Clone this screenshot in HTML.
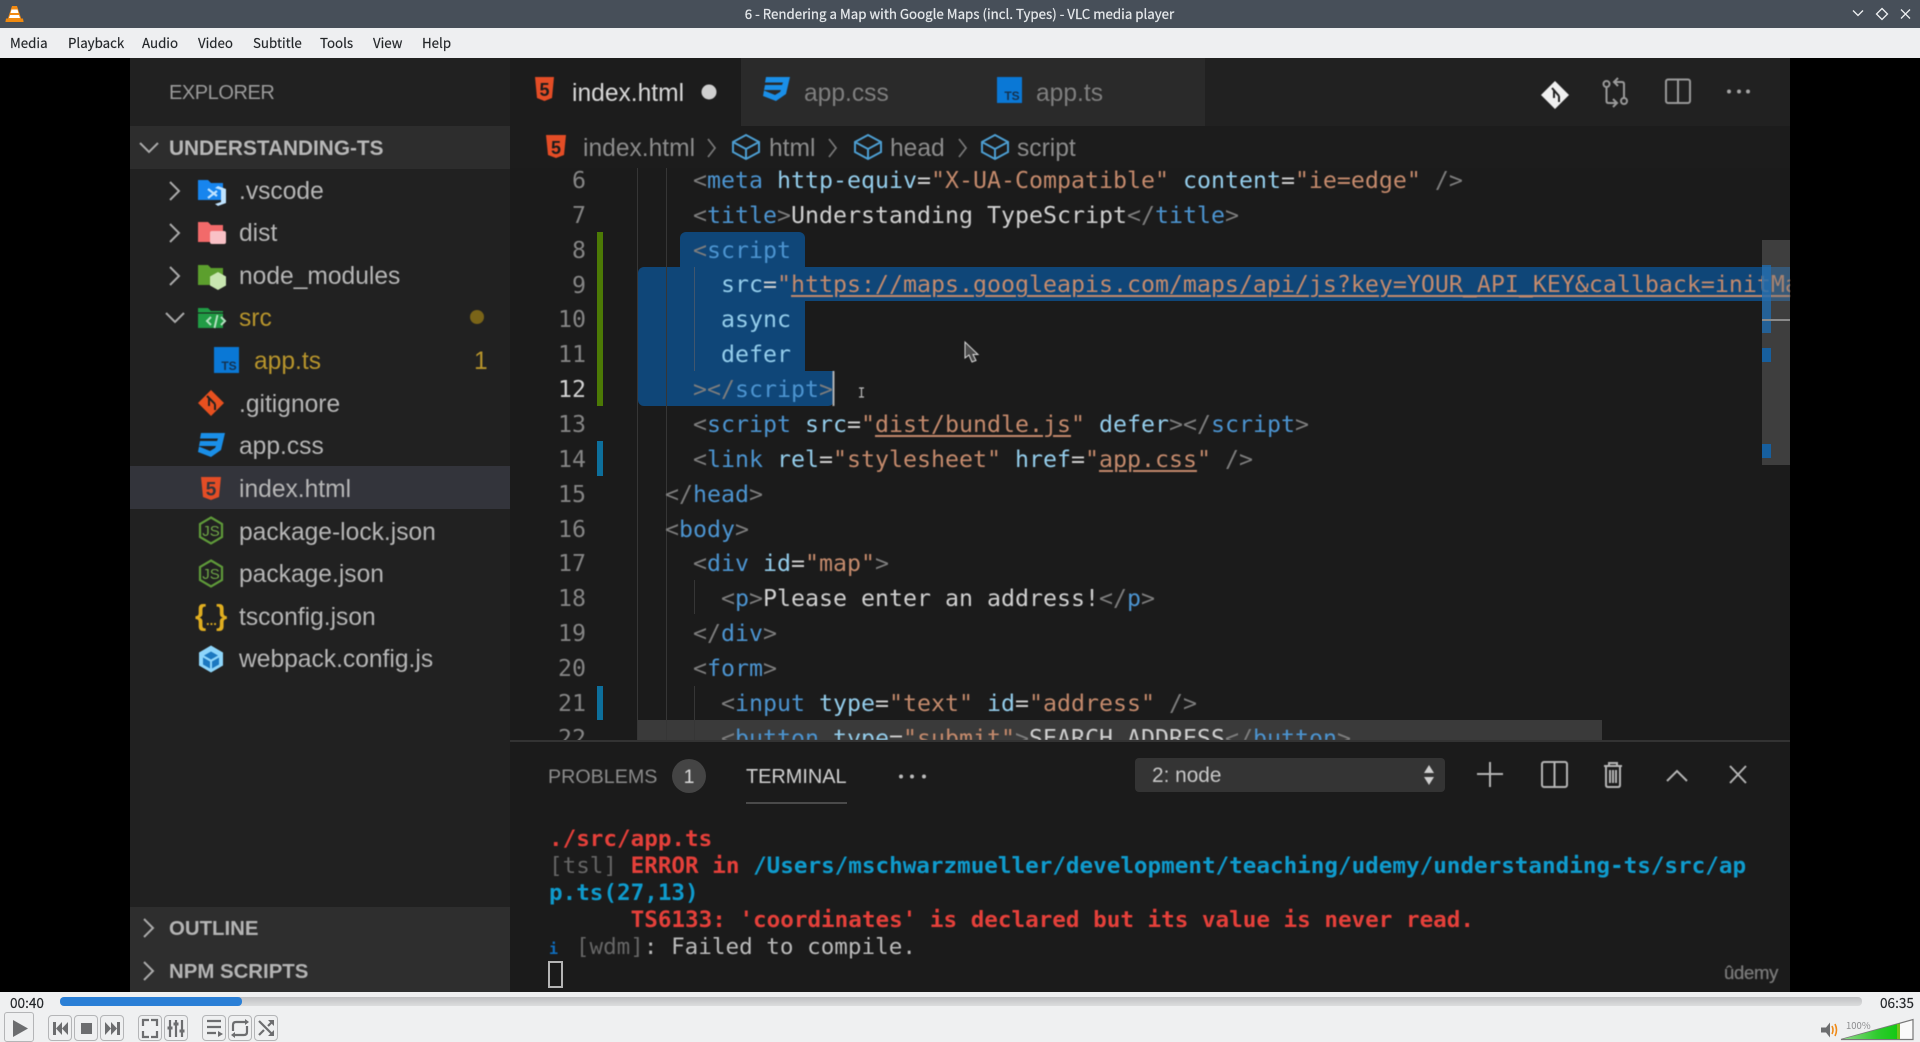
<!DOCTYPE html>
<html lang="en"><head><meta charset="utf-8"><title>6 - Rendering a Map with Google Maps (incl. Types) - VLC media player</title>
<style>
html,body{margin:0;padding:0;width:1920px;height:1042px;overflow:hidden;background:#000}
div,pre,span{box-sizing:border-box}
.a{position:absolute;white-space:pre}
#title{left:0;top:0;width:1920px;height:28px;background:#474f59}
#tt{left:644px;top:0;width:631px;height:28px;text-align:center;color:#e6e9ec;font:13.3px/28px "Noto Sans CJK SC","Liberation Sans",sans-serif;-webkit-text-stroke:.2px #e6e9ec}
#menu{left:0;top:28px;width:1920px;height:30px;background:#eeeff1}
.m{top:28px;font:13.3px/30px "Noto Sans CJK SC","Liberation Sans",sans-serif;color:#232629;-webkit-text-stroke:.15px #232629}
#video{left:0;top:58px;width:1920px;height:934px;background:#000}
.s{font-family:"Liberation Sans",sans-serif;filter:blur(.45px)}
.r{font:24.6px/40px "Liberation Sans",sans-serif;color:#b6b6b6;height:40px;margin-top:1px;filter:blur(.45px)}
#code,#term{font-family:"DejaVu Sans Mono","Liberation Mono",monospace}
#code{left:637px;top:168px;width:1153px;height:572px;overflow:hidden;font-size:23.26px;line-height:34.87px;margin:0;filter:blur(.45px)}
#code pre{position:absolute;left:0;top:-4.2px;margin:0;font:inherit;line-height:34.87px;color:#d0d0d0}
.p{color:#7d7d7d}.t{color:#4c94d0}.k{color:#94cdeb}.v{color:#c48a6c}.u{text-decoration:underline;text-decoration-thickness:2px;text-underline-offset:3px}
.n{left:540px;width:46px;text-align:right;font:23.26px/34.87px "DejaVu Sans Mono",monospace;color:#858585;margin-top:1.3px;filter:blur(.45px)}
#term{left:549px;top:826px;font-size:22.6px;line-height:27.1px;font-weight:bold;margin:0;color:#ccc;position:absolute;filter:blur(.45px)}
.rd{color:#e5403a}.bl{color:#0f9bcd}.gy{color:#666;font-weight:normal}
.ctl{font:13.6px/16px "Noto Sans CJK SC","Liberation Sans",sans-serif;color:#232629;-webkit-text-stroke:.15px #232629}
</style></head><body>
<div class="a" id="title"></div>
<div class="a" id="tt">6 - Rendering a Map with Google Maps (incl. Types) - VLC media player</div>
<div class="a" id="menu"></div>
<div class="a m" style="left:10px">Media</div>
<div class="a m" style="left:68px">Playback</div>
<div class="a m" style="left:142px">Audio</div>
<div class="a m" style="left:198px">Video</div>
<div class="a m" style="left:253px">Subtitle</div>
<div class="a m" style="left:320px">Tools</div>
<div class="a m" style="left:373px">View</div>
<div class="a m" style="left:422px">Help</div>
<div class="a" id="video"></div>

<div class="a" style="left:130px;top:58px;width:380px;height:934px;background:#212121"></div>
<div class="a" style="left:510px;top:58px;width:1280px;height:68px;background:#212121"></div>
<div class="a" style="left:510px;top:58px;width:231px;height:68px;background:#1c1c1c"></div>
<div class="a" style="left:741px;top:58px;width:232px;height:68px;background:#2a2a2a"></div>
<div class="a" style="left:973px;top:58px;width:232px;height:68px;background:#2a2a2a"></div>
<div class="a" style="left:510px;top:126px;width:1280px;height:42px;background:#1c1c1c"></div>
<div class="a" style="left:510px;top:168px;width:1280px;height:824px;background:#1b1b1b"></div>

<div class="a" style="left:130px;top:126px;width:380px;height:43px;background:#2d2d2d"></div>
<div class="a" style="left:130px;top:466px;width:380px;height:43px;background:#33343b"></div>
<div class="a" style="left:130px;top:907px;width:380px;height:85px;background:#2e2e2e"></div>

<div class="a s" style="left:169px;top:73px;font-size:20px;line-height:40px;color:#9b9b9b;letter-spacing:-.45px">EXPLORER</div>
<div class="a s" style="left:169px;top:129px;font-size:20.8px;line-height:40px;font-weight:bold;color:#b8b8b8">UNDERSTANDING-TS</div>
<div class="a r" style="left:239px;top:171px">.vscode</div>
<div class="a r" style="left:239px;top:213px">dist</div>
<div class="a r" style="left:239px;top:256px">node_modules</div>
<div class="a r" style="left:239px;top:298px;color:#b8952c">src</div>
<div class="a r" style="left:254px;top:341px;color:#b8952c">app.ts</div>
<div class="a r" style="left:239px;top:384px">.gitignore</div>
<div class="a r" style="left:239px;top:426px">app.css</div>
<div class="a r" style="left:239px;top:469px">index.html</div>
<div class="a r" style="left:239px;top:512px">package-lock.json</div>
<div class="a r" style="left:239px;top:554px">package.json</div>
<div class="a r" style="left:239px;top:597px">tsconfig.json</div>
<div class="a r" style="left:239px;top:639px">webpack.config.js</div>
<div class="a r" style="left:474px;top:341px;color:#b8952c">1</div>
<div class="a s" style="left:169px;top:909px;font-size:20.4px;line-height:40px;font-weight:bold;color:#b4b4b4">OUTLINE</div>
<div class="a s" style="left:169px;top:952px;font-size:20.4px;line-height:40px;font-weight:bold;color:#b4b4b4">NPM SCRIPTS</div>

<div class="a r" style="left:572px;top:73px;color:#d8d8d8">index.html</div>
<div class="a r" style="left:804px;top:73px;color:#7f7f7f">app.css</div>
<div class="a r" style="left:1036px;top:73px;color:#7f7f7f">app.ts</div>
<div class="a r" style="left:583px;top:128px;color:#8c8c8c">index.html</div>
<div class="a r" style="left:769px;top:128px;color:#8c8c8c">html</div>
<div class="a r" style="left:890px;top:128px;color:#8c8c8c">head</div>
<div class="a r" style="left:1017px;top:128px;color:#8c8c8c">script</div>

<!-- selection -->
<div class="a" style="left:680px;top:232px;width:125px;height:36px;background:#0f4678;border-radius:6px 6px 0 0"></div>
<div class="a" style="left:638px;top:267px;width:1152px;height:34px;background:#0f4678;border-radius:6px 0 0 0"></div>
<div class="a" style="left:638px;top:300px;width:167px;height:72px;background:#0f4678"></div>
<div class="a" style="left:638px;top:371px;width:196px;height:35px;background:#0f4678;border-radius:0 0 6px 6px"></div>
<div class="a" style="left:638px;top:720px;width:964px;height:21px;background:#3a3a3a"></div>
<div class="a" style="left:637px;top:168px;width:1px;height:572px;background:#363636"></div>
<div class="a" style="left:666px;top:168px;width:1px;height:572px;background:#363636"></div>
<div class="a" style="left:694px;top:267px;width:1px;height:104px;background:#40566e"></div>
<div class="a" style="left:694px;top:580px;width:1px;height:34px;background:#363636"></div>
<div class="a" style="left:694px;top:686px;width:1px;height:54px;background:#363636"></div>
<div class="a" style="left:597px;top:232px;width:6px;height:174px;background:#4c7a05"></div>
<div class="a" style="left:597px;top:441px;width:6px;height:35px;background:#0d6f9c"></div>
<div class="a" style="left:597px;top:686px;width:6px;height:34px;background:#0d6f9c"></div>

<div class="a n" style="top:163px;clip-path:inset(5px 0 0 0)">6</div>
<div class="a n" style="top:197.5px">7</div>
<div class="a n" style="top:232.4px">8</div>
<div class="a n" style="top:267.3px">9</div>
<div class="a n" style="top:302.1px">10</div>
<div class="a n" style="top:337px">11</div>
<div class="a n" style="top:371.9px;color:#d2d2d2">12</div>
<div class="a n" style="top:406.7px">13</div>
<div class="a n" style="top:441.6px">14</div>
<div class="a n" style="top:476.5px">15</div>
<div class="a n" style="top:511.4px">16</div>
<div class="a n" style="top:546.2px">17</div>
<div class="a n" style="top:581.1px">18</div>
<div class="a n" style="top:616px">19</div>
<div class="a n" style="top:650.8px">20</div>
<div class="a n" style="top:685.7px">21</div>
<div class="a n" style="top:720.6px;height:20px;overflow:hidden">22</div>

<div class="a" id="code"><pre>    <span class="p">&lt;</span><span class="t">meta</span> <span class="k">http-equiv</span>=<span class="v">"X-UA-Compatible"</span> <span class="k">content</span>=<span class="v">"ie=edge"</span> <span class="p">/&gt;</span>
    <span class="p">&lt;</span><span class="t">title</span><span class="p">&gt;</span>Understanding TypeScript<span class="p">&lt;/</span><span class="t">title</span><span class="p">&gt;</span>
    <span class="p">&lt;</span><span class="t">script</span>
      <span class="k">src</span>=<span class="v">"</span><span class="v u">https://maps.googleapis.com/maps/api/js?key=YOUR_API_KEY&amp;callback=initMap</span><span class="v">"</span>
      <span class="k">async</span>
      <span class="k">defer</span>
    <span class="p">&gt;&lt;/</span><span class="t">script</span><span class="p">&gt;</span>
    <span class="p">&lt;</span><span class="t">script</span> <span class="k">src</span>=<span class="v">"</span><span class="v u">dist/bundle.js</span><span class="v">"</span> <span class="k">defer</span><span class="p">&gt;&lt;/</span><span class="t">script</span><span class="p">&gt;</span>
    <span class="p">&lt;</span><span class="t">link</span> <span class="k">rel</span>=<span class="v">"stylesheet"</span> <span class="k">href</span>=<span class="v">"</span><span class="v u">app.css</span><span class="v">"</span> <span class="p">/&gt;</span>
  <span class="p">&lt;/</span><span class="t">head</span><span class="p">&gt;</span>
  <span class="p">&lt;</span><span class="t">body</span><span class="p">&gt;</span>
    <span class="p">&lt;</span><span class="t">div</span> <span class="k">id</span>=<span class="v">"map"</span><span class="p">&gt;</span>
      <span class="p">&lt;</span><span class="t">p</span><span class="p">&gt;</span>Please enter an address!<span class="p">&lt;/</span><span class="t">p</span><span class="p">&gt;</span>
    <span class="p">&lt;/</span><span class="t">div</span><span class="p">&gt;</span>
    <span class="p">&lt;</span><span class="t">form</span><span class="p">&gt;</span>
      <span class="p">&lt;</span><span class="t">input</span> <span class="k">type</span>=<span class="v">"text"</span> <span class="k">id</span>=<span class="v">"address"</span> <span class="p">/&gt;</span>
      <span class="p">&lt;</span><span class="t">button</span> <span class="k">type</span>=<span class="v">"submit"</span><span class="p">&gt;</span>SEARCH ADDRESS<span class="p">&lt;/</span><span class="t">button</span><span class="p">&gt;</span></pre></div>

<!-- overview ruler -->
<div class="a" style="left:1762px;top:240px;width:28px;height:225px;background:rgba(120,120,120,.38)"></div>
<div class="a" style="left:1762px;top:265px;width:9px;height:68px;background:rgba(30,110,180,.75)"></div>
<div class="a" style="left:1762px;top:319px;width:28px;height:2px;background:#8a8a8a"></div>
<div class="a" style="left:1762px;top:348px;width:9px;height:14px;background:#175f9e"></div>
<div class="a" style="left:1762px;top:444px;width:9px;height:14px;background:#175f9e"></div>

<!-- panel -->
<div class="a" style="left:510px;top:740px;width:1280px;height:252px;background:#1b1b1b;border-top:2px solid #333"></div>
<div class="a s" style="left:548px;top:757px;font-size:19.7px;line-height:40px;color:#8c8c8c">PROBLEMS</div>
<div class="a" style="left:672px;top:759px;width:34px;height:34px;border-radius:50%;background:#444"></div>
<div class="a s" style="left:672px;top:757px;width:34px;text-align:center;font-size:19.5px;line-height:40px;color:#ddd">1</div>
<div class="a s" style="left:746px;top:757px;font-size:19.9px;line-height:40px;color:#d2d2d2">TERMINAL</div>
<div class="a" style="left:746px;top:802px;width:101px;height:2px;background:#4a4a4a"></div>
<div class="a" style="left:1135px;top:758px;width:310px;height:34px;background:#343434;border-radius:4px"></div>
<div class="a s" style="left:1152px;top:756px;font-size:20.8px;line-height:40px;color:#c8c8c8">2: node</div>
<pre id="term"><span class="rd">./src/app.ts</span>
<span class="gy">[tsl]</span> <span class="rd">ERROR in</span> <span class="bl">/Users/mschwarzmueller/development/teaching/udemy/understanding-ts/src/ap</span>
<span class="bl">p.ts(27,13)</span>
      <span class="rd">TS6133: 'coordinates' is declared but its value is never read.</span>
<span style="color:#0f6fc0;font-size:15px">i</span><span style="font-size:7px"> </span> <span class="gy">[wdm]</span><span style="font-weight:normal;color:#bbb">: Failed to compile.</span></pre>
<div class="a" style="left:548px;top:961px;width:15px;height:27px;border:2px solid #b5b5b5"></div>
<div class="a s" style="left:1724px;top:953px;font-size:18.5px;line-height:40px;color:#7a7a7a;letter-spacing:-.3px;-webkit-text-stroke:.3px #7a7a7a">ûdemy</div>

<!-- bottom controls -->
<div class="a" style="left:0;top:992px;width:1920px;height:50px;background:#eff0f1"></div>
<div class="a" style="left:60px;top:997px;width:1802px;height:9px;border-radius:4px;background:linear-gradient(#bfc0c2,#dcddde)"></div>
<div class="a" style="left:60px;top:997px;width:182px;height:9px;border-radius:4px;background:#2a7fd6"></div>
<div class="a ctl" style="left:10px;top:994px">00:40</div>
<div class="a ctl" style="left:1880px;top:994px">06:35</div>
<div class="a" style="left:4px;top:1012px;width:30px;height:30px;border:1px solid #b4b5b7;border-radius:3px"></div>
<div class="a" style="left:48px;top:1015px;width:24px;height:26px;border:1px solid #b4b5b7;border-radius:4px"></div>
<div class="a" style="left:74px;top:1015px;width:24px;height:26px;border:1px solid #b4b5b7;border-radius:4px"></div>
<div class="a" style="left:100px;top:1015px;width:24px;height:26px;border:1px solid #b4b5b7;border-radius:4px"></div>
<div class="a" style="left:138px;top:1015px;width:24px;height:26px;border:1px solid #b4b5b7;border-radius:4px"></div>
<div class="a" style="left:164px;top:1015px;width:24px;height:26px;border:1px solid #b4b5b7;border-radius:4px"></div>
<div class="a" style="left:202px;top:1015px;width:24px;height:26px;border:1px solid #b4b5b7;border-radius:4px"></div>
<div class="a" style="left:228px;top:1015px;width:24px;height:26px;border:1px solid #b4b5b7;border-radius:4px"></div>
<div class="a" style="left:254px;top:1015px;width:24px;height:26px;border:1px solid #b4b5b7;border-radius:4px"></div>

<svg class="a" style="left:0;top:0" width="1920" height="1042" viewBox="0 0 1920 1042" xmlns="http://www.w3.org/2000/svg">
<!-- VLC cone -->
<path d="M12 6h5l5 15H7z" fill="#f28a12"/><path d="M11.500 9.500h6l1 3.500h-8z" fill="#fff"/><path d="M10 15h9l1 3H9z" fill="#fff"/><path d="M6 18.500h17l.6 3.500H5.400z" fill="#f08a10"/>
<!-- window buttons -->
<g fill="none" stroke="#f0f2f4" stroke-width="1.300"><path d="M1853 10.500l5 5 5-5"/><path d="M1882 8.500l5.500 5.500-5.500 5.500-5.500-5.500z"/><path d="M1901 9.500l9 9M1910 9.500l-9 9"/></g>

<g style="filter:blur(.45px)">
<!-- sidebar chevrons -->
<g fill="none" stroke="#aaa" stroke-width="2">
<path d="M140 143l9 9 9-9"/><path d="M170 182l9 9-9 9"/><path d="M170 224l9 9-9 9"/><path d="M170 267l9 9-9 9"/><path d="M166 313l9 9 9-9"/>
<path d="M144 919l9 9-9 9"/><path d="M144 962l9 9-9 9"/>
</g>
<!-- folders -->
<path d="M198 180h10l3 3h12v17h-25z" fill="#1785ee"/>
<path d="M208 189l9 7M208 198l9-7" stroke="#bfe3ff" stroke-width="2.200" fill="none"/><path d="M218 186l8 3v14l-8 3-3-2 6-2v-12l-6-2z" fill="#bfe3ff"/>
<path d="M198 222h10l3 3h12v17h-25z" fill="#f26a6a"/><rect x="210" y="231" width="16" height="13" rx="2" fill="#f9c1c6"/>
<path d="M198 265h10l3 3h12v17h-25z" fill="#5c9f2d"/><path d="M218 272l8 4.500v9l-8 4.500-8-4.500v-9z" fill="#c8e6b0"/>
<path d="M198 308h10l3 3h12v17h-25z" fill="#219c45"/><path d="M198 313h27" stroke="#1a1a1a" stroke-width="1"/><g fill="none" stroke="#b4e0c0" stroke-width="2"><path d="M211 317l-4 4 4 4M221 317l4 4-4 4M217.500 315l-3 13"/></g>
<!-- ts file -->
<rect x="214" y="347" width="25" height="26" fill="#0a78d6"/><text x="229" y="370" font-family="Liberation Sans" font-size="12" font-weight="bold" fill="#15324f" text-anchor="middle">TS</text>
<!-- gitignore -->
<path d="M211 390l13 13-13 13-13-13z" fill="#e8501f"/><path d="M207 396l8 8M215 404v6M209 398v8" stroke="#212121" stroke-width="2" fill="none"/>
<!-- css icon -->
<path d="M201 433H225L221 450 211 457 198 452 199 446.500 210 451 215 448 216 446H199L200 441H217L218 438.500H200Z" fill="#1a8fe8"/>
<path d="M766 77H790L786 94 776 101 763 96 764 90.500 775 95 780 92 781 90H764L765 85H782L783 82.500H765Z" fill="#1a8fe8"/>
<!-- html icon sidebar -->
<path d="M201 477h20l-2 20-8 3-8-3z" fill="#e44d26"/><text x="211" y="495.500" font-family="Liberation Sans" font-size="19" font-weight="bold" fill="#33343b" text-anchor="middle">5</text>
<!-- js hexagons -->
<g fill="none" stroke="#5f9a3a" stroke-width="2.200"><path d="M211 517.500l11 6.500v13l-11 6.500-11-6.500v-13z"/><path d="M211 560.500l11 6.500v13l-11 6.500-11-6.500v-13z"/></g>
<text x="211" y="536" font-family="Liberation Sans" font-size="15" fill="#6fa648" text-anchor="middle">JS</text><text x="211" y="579" font-family="Liberation Sans" font-size="15" fill="#6fa648" text-anchor="middle">JS</text>
<!-- webpack -->
<path d="M211 645.500l12 7v13l-12 7-12-7v-13z" fill="#8ed6fb"/><path d="M211 651.500l7 4-7 4-7-4zM203 657.500l7 4v7l-7-4zM219 657.500l-7 4v7l7-4z" fill="#1c78c0"/>
<!-- tsconfig -->
<text x="195" y="625" font-family="Liberation Sans" font-size="29" font-weight="bold" fill="#e0ae20">{</text><text x="206" y="625" font-family="Liberation Sans" font-size="13" font-weight="bold" fill="#e0ae20">...</text><text x="216" y="625" font-family="Liberation Sans" font-size="29" font-weight="bold" fill="#e0ae20">}</text>
<circle cx="477" cy="317" r="7" fill="#7a6418"/>

<!-- tab icons -->
<path d="M535 77h19l-2 21-7.500 3-7.500-3z" fill="#e44d26"/><text x="544.500" y="96" font-family="Liberation Sans" font-size="18" font-weight="bold" fill="#1c1c1c" text-anchor="middle">5</text>
<circle cx="709" cy="92" r="7.500" fill="#cfcfcf"/>
<rect x="997" y="77" width="25" height="26" fill="#0a78d6"/><text x="1012" y="100" font-family="Liberation Sans" font-size="12" font-weight="bold" fill="#15324f" text-anchor="middle">TS</text>
<!-- breadcrumb -->
<path d="M546 135h20l-2 20-8 3-8-3z" fill="#e44d26"/><text x="556" y="154" font-family="Liberation Sans" font-size="18" font-weight="bold" fill="#1c1c1c" text-anchor="middle">5</text>
<g fill="none" stroke="#777" stroke-width="1.800"><path d="M708 139l7 9-7 9M829 139l7 9-7 9M959 139l7 9-7 9"/></g>
<g fill="none" stroke="#4d9ed1" stroke-width="2">
<path d="M746 135l13 7v10l-13 7-13-7v-10zM733 142l13 7 13-7M746 149v10"/>
<path d="M868 135l13 7v10l-13 7-13-7v-10zM855 142l13 7 13-7M868 149v10"/>
<path d="M995 135l13 7v10l-13 7-13-7v-10zM982 142l13 7 13-7M995 149v10"/>
</g>
<!-- top right editor icons -->
<path d="M1555 81l14 14-14 14-14-14z" fill="#f0f0f0"/><path d="M1552 88l7 8M1559 96v6M1554 90v8" stroke="#212121" stroke-width="2" fill="none"/>
<g fill="none" stroke="#9a9a9a" stroke-width="2"><circle cx="1606.500" cy="84" r="3"/><circle cx="1624" cy="101" r="3"/><path d="M1606.500 87v14q0 2 2 2h8M1613 99l4 4-4 4M1624 98v-14q0-2-2-2h-8M1618 78l-4 4 4 4"/><rect x="1666" y="79.500" width="24" height="23.500" rx="2"/><path d="M1678 80v23"/></g>
<g fill="#a5a5a5"><circle cx="1729" cy="91.500" r="2"/><circle cx="1739" cy="91.500" r="2"/><circle cx="1748" cy="91.500" r="2"/></g>
<!-- cursor -->
<path d="M965 342v16l4-3 3 7 4-1.500-3-6h5z" fill="#4b4b4b" stroke="#ddd" stroke-width="1"/>
<path d="M833.500 371v35" stroke="#b0b0b0" stroke-width="2"/>
<path d="M859 388h5M859 397h5M861.500 388v9" stroke="#bdbdbd" stroke-width="1.200" fill="none"/>
<!-- panel icons -->
<g fill="#bdbdbd"><circle cx="901" cy="776.500" r="2"/><circle cx="912" cy="776.500" r="2"/><circle cx="924" cy="776.500" r="2"/></g>
<path d="M1429 765l5 8h-10zM1429 785l5-8h-10z" fill="#cfcfcf"/>
<g fill="none" stroke="#b5b5b5" stroke-width="2">
<path d="M1477 774h26M1490 762v25"/>
<rect x="1542" y="762" width="25" height="25" rx="2"/><path d="M1554.500 762v25"/>
<path d="M1604 766h18M1609 766v-3h8v3M1606 766v19q0 2 2 2h10q2 0 2-2v-19M1610 770v13M1613 770v13M1616 770v13"/>
<path d="M1667 781l10-10 10 10"/>
<path d="M1730 766l16 17M1746 766l-16 17"/>
</g>
</g>
<!-- transport icons -->
<path d="M13 1020v17l15-8.500z" fill="#6c6d6f"/>
<g fill="#6c6d6f"><path d="M53 1022h3v13h-3zM56 1028.500l6-6.500v13zM62 1028.500l6-6.500v13z"/><rect x="81" y="1023" width="11" height="11"/><path d="M120 1022h-3v13h3zM117 1028.500l-6-6.500v13zM111 1028.500l-6-6.500v13z"/></g>
<g fill="none" stroke="#6c6d6f" stroke-width="2.200">
<path d="M143 1026v-6h6M157 1026v-6h-6M143 1031v6h6M157 1031v6h-6"/>
<path d="M170 1020v17M176 1020v17M182 1020v17" />
<path d="M207 1021h14M207 1027h14M207 1033h9"/>
<path d="M233 1031v-6q0-3 3-3h11M247 1026v6q0 3-3 3h-11"/>
<path d="M259 1021l14 14M259 1035l5-5M268 1026l5-5"/>
</g>
<path d="M218 1031v6l5-3zM245 1019v6l4-3zM235 1032v6l-4-3zM268 1020h6v6zM274 1036h-6l6-6z" fill="#6c6d6f"/>
<path d="M167.500 1028h5M173.500 1024h5M179.500 1031h5" stroke="#6c6d6f" stroke-width="3"/>
<!-- volume -->
<path d="M1821 1030h5l4-5v15l-4-5h-5z" fill="#6c6d6f" transform="translate(0 -2.500)"/>
<path d="M1832 1026q2 4 0 8M1835 1024q3 6 0 12" fill="none" stroke="#ef8a17" stroke-width="1.600"/>
<defs><linearGradient id="vg" x1="0" x2="1" y1="0" y2="0"><stop offset="0" stop-color="#8fd887"/><stop offset=".6" stop-color="#2ecb2e"/><stop offset="1" stop-color="#10c810"/></linearGradient></defs>
<path d="M1841 1039.500l72-20v20z" fill="#fafafa" stroke="#777" stroke-width="1.200"/>
<path d="M1843 1039l57-15.500v15.500z" fill="url(#vg)"/><path d="M1897 1024h3v15h-3z" fill="#72c21a"/>
<text x="1846" y="1029" font-family="Noto Sans CJK SC,Liberation Sans,sans-serif" font-size="9.500" fill="#8d8e90">100%</text>
</svg>
</body></html>
